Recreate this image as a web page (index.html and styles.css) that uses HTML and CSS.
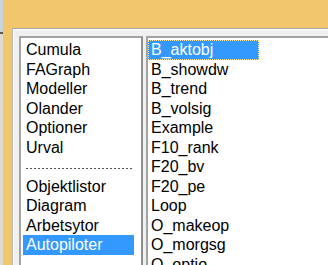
FILE: index.html
```html
<!DOCTYPE html>
<html>
<head>
<meta charset="utf-8">
<link rel="stylesheet" href="styles.css">
</head>
<body>
<div class="screen">
  <div class="edge">
    <div class="edge-top"></div>
    <div class="edge-mark"></div>
    <div class="edge-rest"></div>
  </div>
  <div class="main">
    <div class="panel">
      <div class="list list-left">
        <div class="item">Cumula</div>
        <div class="item">FAGraph</div>
        <div class="item">Modeller</div>
        <div class="item">Olander</div>
        <div class="item">Optioner</div>
        <div class="item">Urval</div>
        <div class="item sep"><span class="dash"></span></div>
        <div class="item">Objektlistor</div>
        <div class="item">Diagram</div>
        <div class="item">Arbetsytor</div>
        <div class="item selected">Autopiloter</div>
        <div class="item"></div>
      </div>
      <div class="list list-right">
        <div class="item selected focused">B_aktobj</div>
        <div class="item">B_showdw</div>
        <div class="item">B_trend</div>
        <div class="item">B_volsig</div>
        <div class="item">Example</div>
        <div class="item">F10_rank</div>
        <div class="item">F20_bv</div>
        <div class="item">F20_pe</div>
        <div class="item">Loop</div>
        <div class="item">O_makeop</div>
        <div class="item">O_morgsg</div>
        <div class="item">O_optio</div>
      </div>
    </div>
  </div>
</div>
</body>
</html>
```
FILE: styles.css
```css
html, body {
  margin: 0;
  padding: 0;
  width: 328px;
  height: 265px;
  overflow: hidden;
}
body {
  font-family: "Liberation Sans", Arial, sans-serif;
  font-size: 16px;
  color: #000;
  background: #f2c66d;
}
.screen {
  display: flex;
  width: 328px;
  height: 265px;
  overflow: hidden;
}
.edge {
  width: 3px;
  display: flex;
  flex-direction: column;
}
.edge-top {
  height: 32px;
  background: #c9d3dc;
}
.edge-mark {
  height: 2px;
  background: #5a5a5a;
}
.edge-rest {
  flex: 1;
  background: #dedad0;
}
.main {
  flex: 1;
  padding: 28px 0 0 9px;
  background: #f2c66d;
  display: flex;
  min-width: 0;
}
.panel {
  flex: 1;
  background: #f0f0f0;
  border-top: 1px solid #a9a9a9;
  border-left: 1px solid #b9b9b9;
  box-shadow: inset 1px 1px 0 #ffffff;
  padding: 7px 0 0 6px;
  display: flex;
  gap: 3px;
  min-width: 0;
}
.list {
  background: #fff;
  border: 2px solid #a3a3a3;
  border-right: 0;
  border-bottom: 0;
  padding: 2px 0 0 2px;
  min-width: 0;
}
.list-left {
  width: 118px;
  border-right: 2px solid #8e8e8e;
}
.list-right {
  flex: 1;
  padding-left: 0;
}
.item {
  width: 111px;
  height: 19.5px;
  line-height: 19.5px;
  padding-left: 3px;
  box-sizing: border-box;
  white-space: nowrap;
}
.selected {
  background: #3399ff;
  color: #fff;
}
.focused {
  outline: 1px dotted #ffe9a0;
  outline-offset: -1px;
}
.sep {
  display: flex;
  align-items: center;
  padding-top: 4px;
}
.dash {
  display: block;
  width: 107px;
  height: 1px;
  background: repeating-linear-gradient(90deg, #555 0 2px, transparent 2px 4px);
}
```
